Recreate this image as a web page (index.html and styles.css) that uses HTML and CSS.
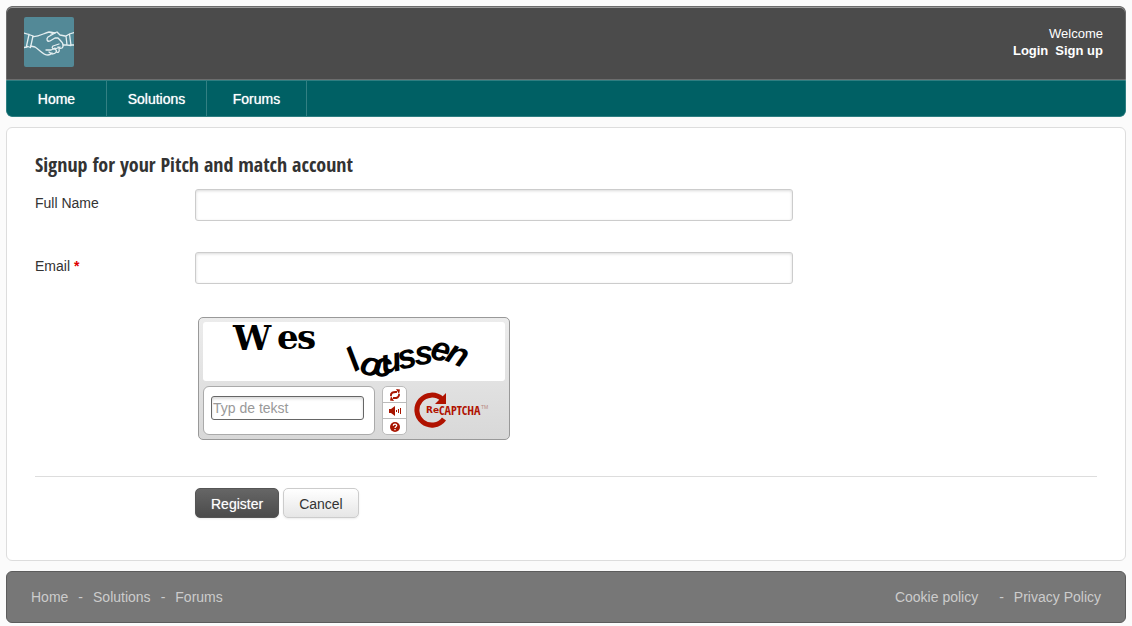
FILE: index.html
```
<!DOCTYPE html>
<html lang="en">
<head>
    <meta charset="UTF-8">
    <meta name="viewport" content="width=device-width, initial-scale=1.0">
    <title>Pitch and match</title>
    <link rel="stylesheet" href="styles.css">
</head>
<body>
    <header class="header">
        <div class="header-top">
            <a href="#" class="logo" aria-label="Home">
                <svg width="50" height="50" viewBox="0 0 50 50" fill="none" stroke="#e4eef0" stroke-width="1.3" stroke-linecap="round" stroke-linejoin="round">
                    <path d="M0 16L5 17.500M0 30.500L3 30M5 17.500L2.500 29M9 19L6.500 30.500M2.500 29L6.500 30.500M5 17.500L9 19"/>
                    <path d="M9 19.500C15 20 20 16 25 15C28 15 30 16 31 16M6.500 29L11 30C16 33 19 38 24 38C26 38 27 37 28 36"/>
                    <path d="M31 16L24 20C22 22 23 25 26 24L31 21L34 21C38 25 41 28 38 31C36 32 35 31 34 30"/>
                    <path d="M27 17L33 15L36 18L41 19M39 28L43 28M42 19L43 28L47 28.500L45.500 17L42 19M45.500 17L50 15.500M47 28L50 28"/>
                    <path d="M35 27L29 29C27 31 29 32 31 32L36 30M22 33L27 33L31 31M31 32C34 34 32 37 28 37L25 35M35 32C36 35 34 36 32 35"/>
                </svg>
            </a>
            <div class="user">
                <span>Welcome</span>
                <div class="user-links">
                    <a href="#">Login</a>
                    <a href="#">Sign up</a>
                </div>
            </div>
        </div>
        <nav class="nav">
            <a href="#">Home</a>
            <a href="#">Solutions</a>
            <a href="#">Forums</a>
        </nav>
    </header>

    <main class="content">
        <h1>Signup for your Pitch and match account</h1>
        <form class="signup">
            <div class="row">
                <label for="name">Full Name</label>
                <input type="text" id="name" class="field">
            </div>
            <div class="row">
                <label for="email">Email <span class="required">*</span></label>
                <input type="text" id="email" class="field">
            </div>

            <div class="captcha">
                <svg class="captcha-image" viewBox="0 0 302 59" role="img" aria-label="Captcha">
                    <text class="word-serif" x="30 74 94" y="28 27 27">Wes</text>
                    <text class="word-wave" x="152 155 170 180 197 212 226 241" y="50 50 54 52 48 43 36 38" rotate="-32 18 2 -12 -14 -4 14 24">locussen</text>
                </svg>
                <div class="captcha-bottom">
                    <div class="captcha-answer">
                        <input type="text" placeholder="Typ de tekst" aria-label="Typ de tekst">
                    </div>
                    <div class="captcha-tools">
                        <button type="button" aria-label="Reload">
                            <svg width="12" height="12" viewBox="0 0 12 12" fill="none" stroke="#a81500" stroke-width="2">
                                <path d="M2 7C1.500 4 4 2.500 8 3M10 5C10.500 8 8 9.500 4 9"/>
                                <path d="M7 0L11 0.500L10 5ZM5 12L1 11.500L2 7Z" fill="#a81500" stroke="none"/>
                            </svg>
                        </button>
                        <button type="button" aria-label="Audio">
                            <svg width="14" height="12" viewBox="0 0 14 12" fill="#a81500">
                                <path d="M1 4H3L7 1V11L3 8H1ZM8 5H9V7H8ZM10 4H11V8H10ZM12 3H13V9H12Z"/>
                            </svg>
                        </button>
                        <button type="button" aria-label="Help">
                            <svg width="12" height="12" viewBox="0 0 12 12">
                                <circle cx="6" cy="6" r="5" fill="#a81500"/>
                                <path d="M4.300 4.800C4.300 2.600 7.700 2.600 7.700 4.600C7.700 5.700 6 5.700 6 7M6 8V9.300" fill="none" stroke="#fff" stroke-width="1.300"/>
                            </svg>
                        </button>
                    </div>
                    <svg class="captcha-logo" width="76" height="38" viewBox="0 0 76 38">
                        <path d="M28 7A15 15 0 1 0 30 27" fill="none" stroke="#b01200" stroke-width="5"/>
                        <path d="M32 1V12H21Z" fill="#b01200"/>
                        <text class="logo-re" x="12" y="21">Re</text>
                        <text class="logo-name" x="25" y="23">CAPTCHA</text>
                        <text class="logo-tm" x="67" y="17">TM</text>
                    </svg>
                </div>
            </div>

            <div class="actions">
                <button type="submit" class="btn btn-primary">Register</button>
                <button type="button" class="btn">Cancel</button>
            </div>
        </form>
    </main>

    <footer class="footer">
        <div class="footer-links">
            <a href="#">Home</a>
            <span>-</span>
            <a href="#">Solutions</a>
            <span>-</span>
            <a href="#">Forums</a>
        </div>
        <div class="footer-links">
            <a href="#" class="cookie">Cookie policy</a>
            <span>-</span>
            <a href="#">Privacy Policy</a>
        </div>
    </footer>
</body>
</html>
```
FILE: styles.css
```
* {
    box-sizing: border-box;
}

body {
    margin: 0;
    padding: 6px 6px 3px;
    background: #fbfbfb;
    color: #333;
    font: 14px/20px "Liberation Sans", Arial, sans-serif;
}

a {
    color: inherit;
    text-decoration: none;
}

.header {
    border-radius: 6px;
    overflow: hidden;
    color: #fff;
}

.header-top {
    display: flex;
    justify-content: space-between;
    padding: 10px 22px 12px 17px;
    background: #4b4b4b;
    border: 1px solid #6c6c6c;
    border-radius: 6px 6px 0 0;
    box-shadow: inset 0 1px 0 #999;
}

.logo {
    display: block;
    height: 50px;
    background: #538997;
    border-radius: 2px;
}

.logo svg {
    display: block;
}

.user {
    padding-top: 8px;
    font-size: 13px;
    line-height: 17px;
    text-align: right;
}

.user-links {
    display: flex;
    gap: 7px;
    font-weight: bold;
}

.nav {
    display: flex;
    background: #006064;
    border: 1px solid #2e7e81;
    border-radius: 0 0 6px 6px;
    text-shadow: 0 0 1px rgba(255, 255, 255, 0.8);
}

.nav a {
    width: 100px;
    padding-top: 1px;
    line-height: 34px;
    text-align: center;
    border-right: 1px solid #338083;
}

.content {
    margin: 10px 0;
    padding: 24px 28px 42px;
    background: #fff;
    border: 1px solid #ddd;
    border-radius: 6px;
}

h1 {
    margin: 0 0 11px;
    font: bold 20px/26px "Open Sans Condensed", "Liberation Sans Narrow", sans-serif;
}

.row {
    display: flex;
    margin-bottom: 31px;
}

.row label {
    width: 160px;
    padding-top: 4px;
}

.required {
    color: #e00000;
    font-weight: bold;
}

.field {
    flex: 1;
    max-width: 598px;
    height: 32px;
    padding: 4px 8px;
    font: inherit;
    border: 1px solid #ccc;
    border-radius: 3px;
    box-shadow: inset 0 1px 3px rgba(0, 0, 0, 0.15);
}

.captcha {
    width: 312px;
    margin: 33px 0 36px 163px;
    padding: 4px;
    background: linear-gradient(#ececec, #d8d8d8);
    border: 1px solid #999;
    border-radius: 5px;
}

.captcha-image {
    display: block;
    width: 100%;
    overflow: visible;
    background: #fff;
    border-radius: 3px;
}

.word-serif {
    font: bold 34px "DejaVu Serif", serif;
}

.word-wave {
    font: italic bold 34px "Liberation Sans", sans-serif;
}

.captcha-bottom {
    display: flex;
    align-items: center;
    gap: 7px;
    padding-top: 5px;
}

.captcha-answer {
    width: 172px;
    height: 49px;
    padding: 9px 10px 0 7px;
    background: #fff;
    border: 1px solid #aaa;
    border-radius: 6px;
}

.captcha-answer input {
    display: block;
    width: 100%;
    height: 24px;
    padding: 0 1px;
    font: inherit;
    border: 1px solid #666;
    border-radius: 3px;
    box-shadow: inset 0 2px 3px rgba(0, 0, 0, 0.15);
}

.captcha-answer input::placeholder {
    color: #999;
}

.captcha-tools {
    display: grid;
    width: 25px;
    height: 49px;
    background: #fff;
    border: 1px solid #bbb;
    border-radius: 5px;
}

.captcha-tools button {
    display: flex;
    align-items: center;
    justify-content: center;
    padding: 0;
    background: none;
    border: 0;
}

.captcha-tools button + button {
    border-top: 1px solid #bbb;
}

.logo-re {
    fill: #b01200;
    font: bold 9px "DejaVu Sans", sans-serif;
}

.logo-name {
    fill: #b01200;
    font: bold 12px "Open Sans Condensed", "Liberation Sans Narrow", sans-serif;
}

.logo-tm {
    fill: #b98880;
    font: 5px "Liberation Sans", sans-serif;
}

.actions {
    display: flex;
    gap: 4px;
    padding: 11px 0 0 160px;
    border-top: 1px solid #ddd;
}

.btn {
    height: 30px;
    padding: 1px 15px 0;
    color: #333;
    font: inherit;
    background: linear-gradient(#fff, #e6e6e6);
    border: 1px solid #ccc;
    border-radius: 5px;
    box-shadow: 0 1px 2px rgba(0, 0, 0, 0.08);
}

.btn-primary {
    color: #fff;
    background: linear-gradient(#666, #4b4b4b);
    border-color: #555;
    text-shadow: 0 0 1px rgba(255, 255, 255, 0.5);
}

.footer {
    display: flex;
    justify-content: space-between;
    padding: 15px 24px;
    color: #ccc;
    background: #777;
    border: 1px solid #5c5c5c;
    border-radius: 6px;
}

.footer-links {
    display: flex;
    gap: 10px;
}

.cookie {
    margin-right: 11px;
}
```
